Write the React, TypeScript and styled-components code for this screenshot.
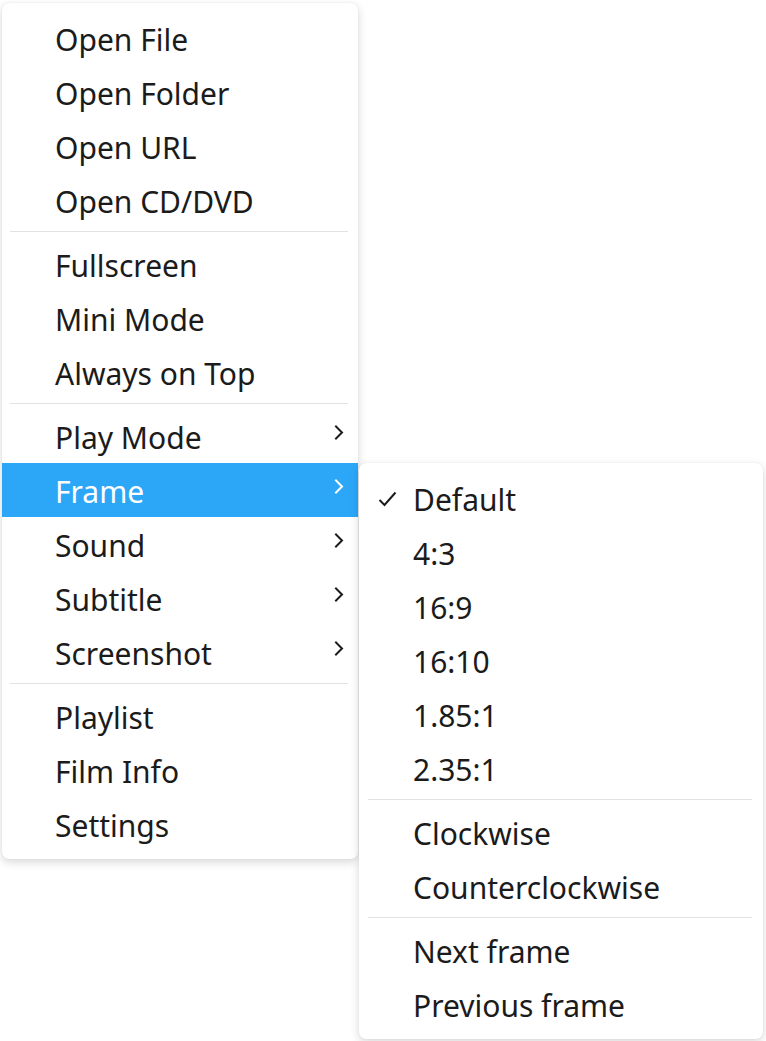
import React from 'react'
import styled, { createGlobalStyle, css } from 'styled-components'

const GlobalStyle = createGlobalStyle`
    html, body {
        margin: 0;
        padding: 0;
        background: #ffffff;
    }
    body {
        font-family: 'Noto Sans', 'DejaVu Sans', sans-serif;
    }
`

const Page = styled.div`
    width: 766px;
    height: 1041px;
    padding: 3px 0 0 2px;
    box-sizing: border-box;
`

const Menu = styled.div<{ width: number }>`
    width: ${(props) => props.width}px;
    box-sizing: border-box;
    padding: 8px 0;
    background: #ffffff;
    border-radius: 7px;
    box-shadow: 0 3px 10px rgba(0, 0, 0, 0.16), 0 0 1px rgba(0, 0, 0, 0.12);
`

const SubMenu = styled(Menu)`
    position: absolute;
    top: 0;
    left: calc(100% + 1px);
    z-index: 2;
`

const Row = styled.div<{ active?: boolean; indent: number }>`
    position: relative;
    display: flex;
    align-items: center;
    height: 54px;
    padding-left: ${(props) => props.indent}px;
    padding-right: 14px;
    font-size: 30px;
    color: #1b1b1b;
    white-space: nowrap;

    ${(props) =>
        props.active &&
        css`
            background: #2ca7f8;
            color: #ffffff;
        `}
`

const Label = styled.span`
    flex: 1;
    line-height: 1;
    padding-top: 3px;
`

const Chevron = styled.svg`
    width: 10px;
    height: 15px;
    margin-top: -8px;
    flex-shrink: 0;
`

const Check = styled.svg`
    position: absolute;
    left: 19px;
    top: 20px;
    width: 19px;
    height: 16px;
`

const Separator = styled.div<{ left: number; right: number }>`
    height: 1px;
    margin: 4px ${(props) => props.right}px 5px ${(props) => props.left}px;
    background: #e2e2e2;
`

type Entry = { label: string; sub?: boolean } | 'sep'

const mainItems: Entry[] = [
    { label: 'Open File' },
    { label: 'Open Folder' },
    { label: 'Open URL' },
    { label: 'Open CD/DVD' },
    'sep',
    { label: 'Fullscreen' },
    { label: 'Mini Mode' },
    { label: 'Always on Top' },
    'sep',
    { label: 'Play Mode', sub: true },
    { label: 'Frame', sub: true },
    { label: 'Sound', sub: true },
    { label: 'Subtitle', sub: true },
    { label: 'Screenshot', sub: true },
    'sep',
    { label: 'Playlist' },
    { label: 'Film Info' },
    { label: 'Settings' },
]

const frameItems: Entry[] = [
    { label: 'Default' },
    { label: '4:3' },
    { label: '16:9' },
    { label: '16:10' },
    { label: '1.85:1' },
    { label: '2.35:1' },
    'sep',
    { label: 'Clockwise' },
    { label: 'Counterclockwise' },
    'sep',
    { label: 'Next frame' },
    { label: 'Previous frame' },
]

function ChevronIcon(props: { color: string }) {
    return (
        <Chevron viewBox="0 0 10 15">
            <path
                d="M2 1.5 L8 7.5 L2 13.5"
                fill="none"
                stroke={props.color}
                strokeWidth="2"
                strokeLinecap="square"
            />
        </Chevron>
    )
}

function FrameMenu() {
    return (
        <SubMenu width={404}>
            {frameItems.map((item, i) =>
                item === 'sep' ? (
                    <Separator key={i} left={9} right={11} />
                ) : (
                    <Row key={i} indent={54}>
                        {item.label === 'Default' && (
                            <Check viewBox="0 0 19 16">
                                <path
                                    d="M1.5 9 L6.5 14 L17.5 1.5"
                                    fill="none"
                                    stroke="#1b1b1b"
                                    strokeWidth="2"
                                />
                            </Check>
                        )}
                        <Label>{item.label}</Label>
                    </Row>
                ),
            )}
        </SubMenu>
    )
}

export default function App() {
    return (
        <Page>
            <GlobalStyle />
            <Menu width={356}>
                {mainItems.map((item, i) =>
                    item === 'sep' ? (
                        <Separator key={i} left={8} right={10} />
                    ) : (
                        <Row
                            key={i}
                            indent={53}
                            active={item.label === 'Frame'}
                        >
                            <Label>{item.label}</Label>
                            {item.sub && (
                                <ChevronIcon
                                    color={
                                        item.label === 'Frame'
                                            ? '#ffffff'
                                            : '#1b1b1b'
                                    }
                                />
                            )}
                            {item.label === 'Frame' && <FrameMenu />}
                        </Row>
                    ),
                )}
            </Menu>
        </Page>
    )
}
